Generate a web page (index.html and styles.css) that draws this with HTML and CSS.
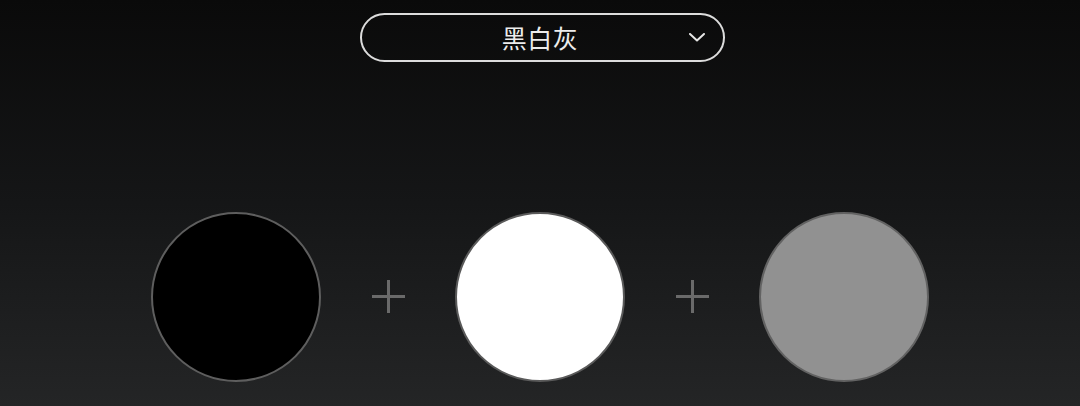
FILE: index.html
```html
<!DOCTYPE html>
<html lang="zh">
<head>
<meta charset="utf-8">
<link rel="stylesheet" href="styles.css">
</head>
<body>
<div class="screen">
  <div class="select">
    <span class="select-label">黑白灰</span>
    <svg class="chevron" width="16" height="9" viewBox="0 0 16 9"><path d="M1 1 L8 7.5 L15 1" fill="none" stroke="#e6e6e6" stroke-width="2" stroke-linecap="round" stroke-linejoin="round"/></svg>
  </div>
  <div class="swatches">
    <div class="swatch swatch-black"></div>
    <div class="plus"><span class="plus-h"></span><span class="plus-v"></span></div>
    <div class="swatch swatch-white"></div>
    <div class="plus"><span class="plus-h"></span><span class="plus-v"></span></div>
    <div class="swatch swatch-gray"></div>
  </div>
</div>
</body>
</html>
```
FILE: styles.css
```css
html, body {
  margin: 0;
  padding: 0;
}
body {
  width: 1080px;
  height: 406px;
  overflow: hidden;
  background: linear-gradient(to bottom, #0a0a0a 0%, #151617 50%, #242526 100%);
  font-family: "Noto Sans CJK SC", "Noto Sans", sans-serif;
}
.screen {
  display: flex;
  flex-direction: column;
  align-items: center;
  height: 406px;
}
.select {
  margin-top: 13px;
  margin-left: 4px;
  padding-right: 4px;
  box-sizing: border-box;
  width: 365px;
  height: 49px;
  border: 2px solid #dcdcdc;
  border-radius: 25px;
  display: flex;
  align-items: center;
  justify-content: center;
  position: relative;
}
.select-label {
  color: #ececec;
  font-size: 25px;
  font-weight: 400;
  letter-spacing: 0.5px;
  line-height: 1;
}
.chevron {
  position: absolute;
  right: 18px;
  top: 18px;
}
.swatches {
  margin-top: 150px;
  display: flex;
  align-items: center;
}
.swatch {
  box-sizing: border-box;
  width: 170px;
  height: 170px;
  border-radius: 50%;
}
.swatch-black {
  background: #000;
  border: 2px solid #5e5e5e;
}
.swatch-white {
  background: #fff;
  border: 2px solid #5a5a5a;
}
.swatch-gray {
  background: #919191;
  border: 2px solid #626262;
}
.plus {
  width: 134px;
  height: 34px;
  position: relative;
}
.plus-h {
  position: absolute;
  left: 51px;
  top: 15px;
  width: 33px;
  height: 3px;
  background: #6a6a6a;
}
.plus-v {
  position: absolute;
  left: 66px;
  top: 0;
  width: 3px;
  height: 33px;
  background: #6a6a6a;
}
```
